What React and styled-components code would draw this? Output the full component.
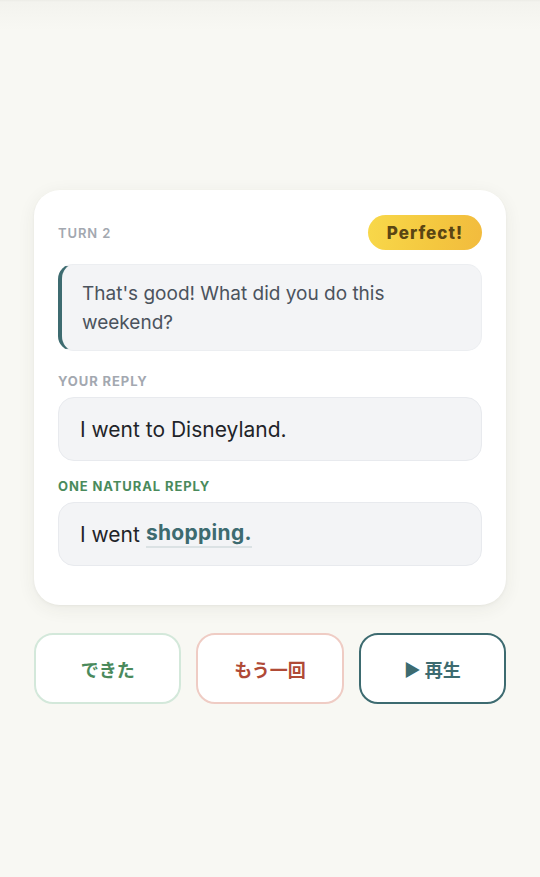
import React from 'react';
import styled, { createGlobalStyle } from 'styled-components';

const GlobalStyle = createGlobalStyle`
  html, body {
    margin: 0;
    padding: 0;
    background: #f8f8f3;
  }
  body {
    font-family: Inter, "Noto Sans", "Noto Sans CJK JP", sans-serif;
    -webkit-font-smoothing: antialiased;
  }
`;

const Page = styled.div`
  min-height: 877px;
  box-sizing: border-box;
  padding: 190px 34px 40px;
  background:
    linear-gradient(to bottom, #ecece6 0px, #f3f3ee 2px, #f8f8f3 30px, #f8f8f3 100%);
  display: flex;
  flex-direction: column;
  gap: 28px;
`;

const Card = styled.section`
  background: #ffffff;
  border-radius: 26px;
  padding: 25px 24px 39px;
  box-shadow: 0 4px 18px rgba(60, 60, 40, 0.07), 0 1px 3px rgba(60, 60, 40, 0.05);
  display: flex;
  flex-direction: column;
`;

const Header = styled.div`
  display: flex;
  justify-content: space-between;
  align-items: center;
  margin-bottom: 14px;
`;

const Label = styled.div`
  font-size: 13px;
  font-weight: ${p => (p.$strong ? 700 : 600)};
  letter-spacing: 0.9px;
  text-transform: uppercase;
  color: ${p => p.$color || '#a3a8b0'};
  margin: ${p => p.$margin || '0'};
`;

const Badge = styled.div`
  height: 35px;
  padding: 0 19px;
  border-radius: 18px;
  display: flex;
  align-items: center;
  background: linear-gradient(100deg, #f8d84a 0%, #f4c73f 60%, #f2bb3e 100%);
  color: #5a4513;
  font-size: 17px;
  font-weight: 800;
  letter-spacing: 1px;
`;

const Prompt = styled.div`
  background: #f3f4f6;
  border: 1px solid #eceef1;
  border-left: 4px solid #3d6b70;
  border-radius: 15px;
  padding: 14px 20px 13px 20px;
  font-size: 19px;
  line-height: 29px;
  color: #4b535d;
`;

const ReplyBox = styled.div`
  height: 64px;
  box-sizing: border-box;
  background: #f3f4f6;
  border: 1px solid #e8eaee;
  border-radius: 16px;
  padding: 0 21px;
  display: flex;
  align-items: center;
  font-size: 21px;
  color: #1f2429;
`;

const Highlight = styled.span`
  font-weight: 700;
  color: #3d6b70;
  letter-spacing: 0.3px;
  border-bottom: 2px solid rgba(61, 107, 112, 0.13);
  padding-bottom: 1px;
  margin-left: 6px;
`;

const Actions = styled.div`
  display: grid;
  grid-template-columns: repeat(3, 1fr);
  gap: 15px;
`;

const ActionButton = styled.button`
  height: 71px;
  border-radius: 19px;
  background: #ffffff;
  border: 2px solid ${p => p.$border};
  color: ${p => p.$color};
  font-family: "Noto Sans CJK JP", sans-serif;
  font-size: 18px;
  font-weight: 700;
  display: flex;
  align-items: center;
  justify-content: center;
  gap: 4px;
  cursor: pointer;
`;

const Play = styled.span`
  font-size: 17px;
`;

export default function App() {
  return (
    <>
      <GlobalStyle />
      <Page>
        <Card>
          <Header>
            <Label>Turn 2</Label>
            <Badge>Perfect!</Badge>
          </Header>
          <Prompt>That's good! What did you do this weekend?</Prompt>
          <Label $strong $margin="22px 0 8px">Your reply</Label>
          <ReplyBox>I went to Disneyland.</ReplyBox>
          <Label $strong $color="#4a8a5c" $margin="17px 0 8px">One natural reply</Label>
          <ReplyBox>
            I went<Highlight>shopping.</Highlight>
          </ReplyBox>
        </Card>
        <Actions>
          <ActionButton $border="#d3e8da" $color="#4a8a5c">できた</ActionButton>
          <ActionButton $border="#efccc4" $color="#b04a36">もう一回</ActionButton>
          <ActionButton $border="#3d6b70" $color="#3d6b70">
            <Play>▶</Play>再生
          </ActionButton>
        </Actions>
      </Page>
    </>
  );
}
